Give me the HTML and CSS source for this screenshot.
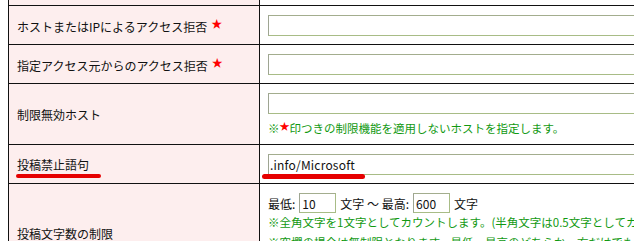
FILE: index.html
```html
<!DOCTYPE html>
<html lang="ja">
  <head>
    <meta charset="UTF-8" />
    <meta name="viewport" content="width=device-width, initial-scale=1.0" />
    <title>アクセス制限設定</title>
    <link rel="stylesheet" href="styles.css">
  </head>
  <body>
    <div class="page">
      <table class="form">
        <tr class="prev">
          <th></th>
          <td></td>
        </tr>
        <tr>
          <th>ホストまたはIPによるアクセス拒否<span class="req">★</span></th>
          <td><input type="text" class="wide" /></td>
        </tr>
        <tr>
          <th>指定アクセス元からのアクセス拒否<span class="req">★</span></th>
          <td><input type="text" class="wide" /></td>
        </tr>
        <tr>
          <th>制限無効ホスト</th>
          <td>
            <input type="text" class="wide" />
            <p class="note">※<span class="req-s">★</span>印つきの制限機能を適用しないホストを指定します。</p>
          </td>
        </tr>
        <tr>
          <th>投稿禁止語句<span class="mark mark-label"></span></th>
          <td>
            <input type="text" class="wide mono" value=".info/Microsoft" />
            <span class="mark mark-input"></span>
          </td>
        </tr>
        <tr class="limit">
          <th>投稿文字数の制限</th>
          <td>
            <div class="range">
              <span>最低:</span>
              <input type="text" class="short" value="10" />
              <span>文字 ～ 最高:</span>
              <input type="text" class="short" value="600" />
              <span>文字</span>
            </div>
            <p class="note first">※全角文字を1文字としてカウントします。(半角文字は0.5文字としてカウントします)</p>
            <p class="note">※空欄の場合は無制限となります。最低・最高のどちらか一方だけでも設定できます。</p>
          </td>
        </tr>
      </table>
    </div>
  </body>
</html>
```

FILE: styles.css
```css
html,
body {
  margin: 0;
}

body {
  font-family: "Noto Sans CJK JP", "Noto Sans", sans-serif;
  font-size: 12px;
  color: #111;
  background-color: #fff;
  overflow: hidden;
}

.page {
  padding: 0 8px;
  overflow: hidden;
}

.form {
  border-collapse: collapse;
  width: 1000px;
  margin-top: -30px;
}

.form th,
.form td {
  border: 1px solid #111;
  position: relative;
}

.form th {
  width: 234px;
  padding: 0 8px;
  background-color: #fdeeee;
  text-align: left;
  font-weight: normal;
  vertical-align: middle;
}

.form td {
  padding: 9px 8px 8px;
  vertical-align: top;
  background-color: #fff;
}

.form .prev th,
.form .prev td {
  padding: 0;
  height: 34px;
}

.req {
  color: #f00;
  font-size: 11px;
  margin-left: 4px;
  vertical-align: 4px;
}

.req-s {
  color: #f00;
  font-size: 10px;
  vertical-align: 3px;
}

input[type="text"] {
  box-sizing: border-box;
  border: 1px solid #a8bc86;
  border-top-color: #a3ad8e;
  border-left-color: #9ea592;
  font-family: "Noto Sans CJK JP", "Noto Sans", sans-serif;
  font-size: 12px;
  color: #111;
  background-color: #fff;
  margin: 0;
}

.wide {
  display: block;
  width: 540px;
  height: 21px;
  padding: 0 1px;
}

.mono {
  letter-spacing: 0.2px;
}

.short {
  width: 37px;
  height: 20px;
  padding: 0 2px;
}

.note {
  margin: 4px 0 0;
  line-height: 16px;
  font-size: 11.5px;
  color: #119911;
  white-space: nowrap;
}

.note.first {
  margin-top: 1px;
}

.range {
  display: flex;
  align-items: center;
  gap: 4px;
  height: 20px;
}

.limit td {
  height: 81px;
}

.mark {
  position: absolute;
  height: 4px;
  border-radius: 3px;
  background-color: #e60000;
}

.mark-label {
  left: 7px;
  bottom: 5px;
  width: 85px;
}

.mark-input {
  left: 2px;
  bottom: 4px;
  width: 103px;
  height: 5px;
}
```
